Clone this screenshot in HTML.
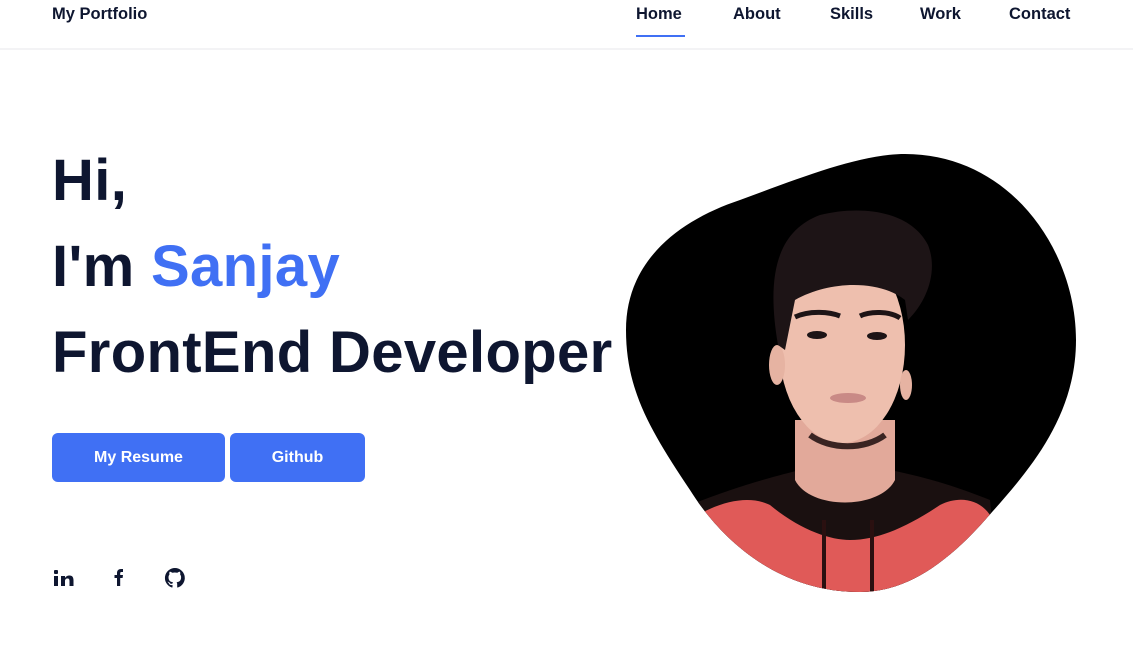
<!DOCTYPE html>
<html><head><meta charset="utf-8"><style>
*{margin:0;padding:0;box-sizing:border-box}
body{width:1133px;height:647px;background:#fff;font-family:"Liberation Sans",sans-serif;color:#0e1630;position:relative;overflow:hidden}
.hdr{position:absolute;left:0;top:0;width:1133px;height:50px;border-bottom:2px solid #f3f3f5}
.logo{position:absolute;left:52px;top:5px;font-size:16.5px;font-weight:bold}
.nav a{position:absolute;top:5px;font-size:16.5px;font-weight:bold;color:#0e1630;text-decoration:none}
.ul{position:absolute;left:636px;top:35px;width:49px;height:2px;background:#4070f4}
h1{position:absolute;left:52px;font-size:58px;font-weight:bold;color:#0e1630;white-space:nowrap;letter-spacing:0.35px}
.b{color:#4070f4}
.btn{position:absolute;top:433px;height:49px;background:#4070f4;color:#fff;border-radius:6px;font-weight:bold;font-size:16px;text-align:center;line-height:49px}
</style></head><body>
<div class="hdr"></div>
<div class="logo">My Portfolio</div>
<div class="nav"><a style="left:636px">Home</a><a style="left:733px">About</a><a style="left:830px">Skills</a><a style="left:920px">Work</a><a style="left:1009px">Contact</a></div>
<div class="ul"></div>
<h1 style="top:147px">Hi,</h1>
<h1 style="top:233px">I'm <span class="b">Sanjay</span></h1>
<h1 style="top:319px">FrontEnd Developer</h1>
<div class="btn" style="left:52px;width:173px">My Resume</div>
<div class="btn" style="left:230px;width:135px">Github</div>
<svg style="position:absolute;left:52px;top:567px" width="140" height="22" viewBox="0 0 140 22">
<g fill="#0e1630">
<rect x="2" y="3" width="4" height="4" rx="1"/><rect x="2" y="9" width="4" height="10"/>
<path d="M9 9h4v2c1-2 3-2.5 4.5-2.5 3 0 4 2 4 5V19h-4v-5c0-1.5-.5-2.5-2-2.5s-2.5 1-2.5 2.5v5H9z"/>
<path d="M65 19v-8h-2.5V8H65V6c0-2.5 1.5-4 4-4h2v3h-1.5c-1 0-1.3.5-1.3 1.3V8h2.8l-.4 3h-2.4v8z"/>
<path d="M123 1a10 10 0 0 0-3.2 19.5c.5.1.7-.2.7-.5v-2c-2.8.6-3.4-1.2-3.4-1.2-.5-1.2-1.1-1.5-1.1-1.5-.9-.6.1-.6.1-.6 1 .1 1.5 1 1.5 1 .9 1.5 2.3 1.1 2.9.8.1-.6.3-1.1.6-1.3-2.2-.3-4.6-1.1-4.6-5 0-1.1.4-2 1-2.7-.1-.3-.4-1.3.1-2.7 0 0 .8-.3 2.7 1a9.4 9.4 0 0 1 5 0c1.9-1.3 2.7-1 2.7-1 .5 1.4.2 2.4.1 2.7.6.7 1 1.6 1 2.7 0 3.9-2.4 4.7-4.6 5 .4.3.7.9.7 1.9V20c0 .3.2.6.7.5A10 10 0 0 0 123 1z"/>
</g></svg>
<svg style="position:absolute;left:0;top:0" width="1133" height="647">
<defs><clipPath id="c"><path d="M905,154 C1010,154 1076,250 1076,340 C1076,420 1025,475 985,520 C945,565 905,592 860,592 C770,592 715,530 690,490 C650,430 626,390 626,330 C626,260 680,220 740,200 C800,178 860,154 905,154Z"/></clipPath></defs>
<g clip-path="url(#c)">
<rect x="600" y="140" width="500" height="470" fill="#000"/>
<path d="M690,505 C740,485 780,475 800,470 L890,470 C930,478 960,488 990,500 L1000,610 L680,610Z" fill="#1a1010"/>
<path d="M690,520 C720,500 750,495 770,505 C800,530 830,540 850,540 C880,540 910,525 940,505 C960,495 980,500 990,515 L1000,610 L680,610Z" fill="#e05a58"/>
<rect x="822" y="520" width="4" height="80" fill="#2a1010"/><rect x="870" y="520" width="4" height="80" fill="#2a1010"/>
<path d="M795,420 L895,420 L895,480 C880,510 810,510 795,480Z" fill="#e2a99a"/>
<ellipse cx="842" cy="345" rx="63" ry="98" fill="#eebfae"/>
<ellipse cx="777" cy="365" rx="8" ry="20" fill="#e6b3a2"/><ellipse cx="906" cy="385" rx="6" ry="15" fill="#e6b3a2"/>
<path d="M778,345 C765,270 780,230 820,215 C860,205 910,210 928,245 C938,270 928,300 908,320 L905,300 C880,280 830,280 795,300 L785,350Z" fill="#1d1416"/>
<path d="M795,317 C810,310 830,312 840,316 M860,316 C870,311 890,311 900,318" stroke="#1d1416" stroke-width="5" fill="none"/>
<ellipse cx="817" cy="335" rx="10" ry="4" fill="#1d1416"/><ellipse cx="877" cy="336" rx="10" ry="4" fill="#1d1416"/>
<path d="M810,435 C830,450 865,450 885,435" stroke="#3a2422" stroke-width="6" fill="none"/>
<ellipse cx="848" cy="398" rx="18" ry="5" fill="#c98a86"/>
</g></svg>
</body></html>
